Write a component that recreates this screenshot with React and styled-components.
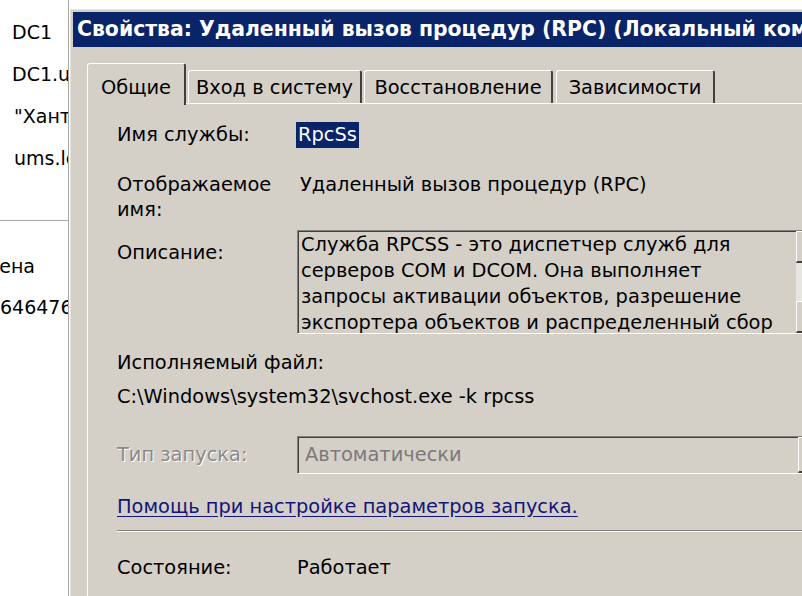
import React from "react";
import styled, { createGlobalStyle } from "styled-components";

const Global = createGlobalStyle`
  html, body { margin: 0; padding: 0; background: #fff; }
  body { font-family: "DejaVu Sans", "Liberation Sans", sans-serif; }
`;

const Page = styled.div`
  display: flex;
  align-items: flex-start;
  width: 802px;
  height: 596px;
  overflow: hidden;
  background: #fff;
  font-family: "DejaVu Sans", "Liberation Sans", sans-serif;
  font-size: 19.4px;
  color: #000;
`;

const LeftPane = styled.div`
  flex: 0 0 68px;
  width: 68px;
  height: 596px;
  border-right: 1px solid #a9a9a9;
  overflow: hidden;
  display: flex;
  flex-direction: column;
  white-space: nowrap;
  font-size: 19px;
`;

const TopList = styled.div`
  padding-top: 11px;
  padding-left: 12px;
`;

const ListItem = styled.div`
  height: ${(p) => p.$h || 42}px;
  line-height: ${(p) => p.$h || 42}px;
  padding-left: ${(p) => p.$pad || 0}px;
`;

const ClippedItem = styled.div`
  display: flex;
  justify-content: flex-end;
  width: ${(p) => p.$w}px;
  height: 41px;
  line-height: 41px;
`;

const ListDivider = styled.div`
  margin-top: 41px;
  border-top: 1px solid #a9a9a9;
`;

const BottomList = styled.div`
  padding-top: 25px;
`;

const Dialog = styled.div`
  flex: 0 0 auto;
  width: 760px;
  margin-left: 1px;
  margin-top: 9px;
  border-top: 1px solid #e6e4df;
  border-left: 1px solid #e6e4df;
  padding: 2px 0 0 2px;
  background: #d4d0c8;
  display: flex;
  flex-direction: column;
`;

const TitleBar = styled.div`
  flex: 0 0 35px;
  height: 35px;
  line-height: 35px;
  background: #0a246a;
  color: #fff;
  font-weight: bold;
  font-size: 20.4px;
  padding-left: 4px;
  white-space: nowrap;
  overflow: hidden;
`;

const Body = styled.div`
  flex: 0 0 auto;
  padding: 16px 0 0 14px;
`;

const TabStrip = styled.div`
  display: flex;
  align-items: flex-end;
  height: 40px;
  position: relative;
  z-index: 1;
`;

const Tab = styled.div`
  box-sizing: border-box;
  width: ${(p) => p.$w}px;
  height: ${(p) => (p.$active ? 42 : 33)}px;
  margin-left: ${(p) => p.$gap || 0}px;
  margin-bottom: ${(p) => (p.$active ? -2 : 0)}px;
  background: #d4d0c8;
  border-top: 1px solid #fff;
  border-left: 1px solid #fff;
  border-right: 2px solid #404040;
  border-top-left-radius: 3px;
  border-top-right-radius: 3px;
  display: flex;
  align-items: flex-end;
  justify-content: center;
  padding-bottom: ${(p) => (p.$active ? 4 : 2)}px;
  line-height: 26px;
  white-space: nowrap;
`;

const Panel = styled.div`
  border-top: 1px solid #fff;
  border-left: 1px solid #fff;
  padding: 18px 0 40px 29px;
  white-space: nowrap;
`;

const Row = styled.div`
  display: grid;
  grid-template-columns: 180px 1fr;
  align-items: start;
  margin-top: ${(p) => p.$mt || 0}px;
  line-height: ${(p) => p.$lh || 26}px;
`;

const Label = styled.div`
  padding-top: ${(p) => p.$pt || 0}px;
  color: ${(p) => (p.$disabled ? "#8a8a8a" : "#000")};
  text-shadow: ${(p) => (p.$disabled ? "1px 1px 0 #fff" : "none")};
`;

const Value = styled.div`
  padding-left: ${(p) => p.$pl || 0}px;
`;

const Selected = styled.span`
  display: inline-block;
  background: #0a246a;
  color: #fff;
  padding: 0 2px 0 2px;
  margin-left: -1px;
`;

const TextBox = styled.div`
  display: flex;
  width: 534px;
  height: 104px;
  box-sizing: border-box;
  border-top: 1px solid #808080;
  border-left: 1px solid #808080;
  border-bottom: 1px solid #fff;
  border-right: 1px solid #fff;
  box-shadow: inset 1px 1px 0 #404040;
  background: #d4d0c8;
`;

const TextBody = styled.div`
  flex: 1;
  padding: 1px 0 0 3px;
  line-height: 26px;
  overflow: hidden;
`;

const ScrollBar = styled.div`
  flex: 0 0 34px;
  display: flex;
  flex-direction: column;
  background: #e8e6e1;
`;

const ScrollButton = styled.div`
  height: ${(p) => p.$h}px;
  box-sizing: border-box;
  background: #d4d0c8;
  border-top: 1px solid #fff;
  border-left: 1px solid #fff;
  border-bottom: 2px solid #404040;
  border-right: 2px solid #404040;
`;

const ScrollTrack = styled.div`
  flex: 1;
`;

const Block = styled.div`
  margin-top: ${(p) => p.$mt || 0}px;
  line-height: 26px;
`;

const Combo = styled.div`
  display: flex;
  width: 538px;
  height: 38px;
  box-sizing: border-box;
  border-top: 1px solid #808080;
  border-left: 1px solid #808080;
  border-bottom: 1px solid #fff;
  border-right: 1px solid #fff;
  box-shadow: inset 1px 1px 0 #404040;
  background: #d4d0c8;
`;

const ComboText = styled.div`
  flex: 1;
  padding-left: 7px;
  line-height: 36px;
  color: #7a7a7a;
`;

const ComboButton = styled.div`
  flex: 0 0 36px;
  box-sizing: border-box;
  border-top: 1px solid #fff;
  border-left: 1px solid #fff;
  border-bottom: 2px solid #404040;
  border-right: 2px solid #404040;
`;

const Link = styled.a`
  display: inline-block;
  color: #141478;
  text-decoration: underline;
  text-underline-offset: 3px;
  cursor: pointer;
`;

const Separator = styled.div`
  margin-top: 10px;
  border-top: 1px solid #808080;
  border-bottom: 1px solid #fff;
`;

export default function App() {
  return (
    <>
      <Global />
      <Page>
        <LeftPane>
          <TopList>
            <ListItem>DC1</ListItem>
            <ListItem>DC1.ums.local</ListItem>
            <ListItem $pad={2}>"Ханты-Мансийск"</ListItem>
            <ListItem $pad={2}>ums.local</ListItem>
          </TopList>
          <ListDivider />
          <BottomList>
            <ClippedItem $w={35}>
              <span>Отключена</span>
            </ClippedItem>
            <ListItem $h={41}>6464763</ListItem>
          </BottomList>
        </LeftPane>
        <Dialog>
          <TitleBar>Свойства: Удаленный вызов процедур (RPC) (Локальный компьютер)</TitleBar>
          <Body>
            <TabStrip>
              <Tab $w={99} $active>Общие</Tab>
              <Tab $w={174} $gap={2}>Вход в систему</Tab>
              <Tab $w={189} $gap={2}>Восстановление</Tab>
              <Tab $w={159} $gap={3}>Зависимости</Tab>
            </TabStrip>
            <Panel>
              <Row>
                <Label>Имя службы:</Label>
                <Value>
                  <Selected>RpcSs</Selected>
                </Value>
              </Row>
              <Row $mt={24} $lh={25}>
                <Label>
                  Отображаемое
                  <br />
                  имя:
                </Label>
                <Value $pl={3}>Удаленный вызов процедур (RPC)</Value>
              </Row>
              <Row $mt={8}>
                <Label $pt={10}>Описание:</Label>
                <TextBox>
                  <TextBody>
                    Служба RPCSS - это диспетчер служб для
                    <br />
                    серверов COM и DCOM. Она выполняет
                    <br />
                    запросы активации объектов, разрешение
                    <br />
                    экспортера объектов и распределенный сбор
                  </TextBody>
                  <ScrollBar>
                    <ScrollButton $h={32} />
                    <ScrollTrack />
                    <ScrollButton $h={32} />
                  </ScrollBar>
                </TextBox>
              </Row>
              <Block $mt={16}>Исполняемый файл:</Block>
              <Block $mt={8}>C:\Windows\system32\svchost.exe -k rpcss</Block>
              <Row $mt={26}>
                <Label $disabled $pt={6}>Тип запуска:</Label>
                <Combo>
                  <ComboText>Автоматически</ComboText>
                  <ComboButton />
                </Combo>
              </Row>
              <Block $mt={20}>
                <Link>Помощь при настройке параметров запуска.</Link>
              </Block>
              <Separator />
              <Row $mt={23}>
                <Label>Состояние:</Label>
                <Value>Работает</Value>
              </Row>
            </Panel>
          </Body>
        </Dialog>
      </Page>
    </>
  );
}
